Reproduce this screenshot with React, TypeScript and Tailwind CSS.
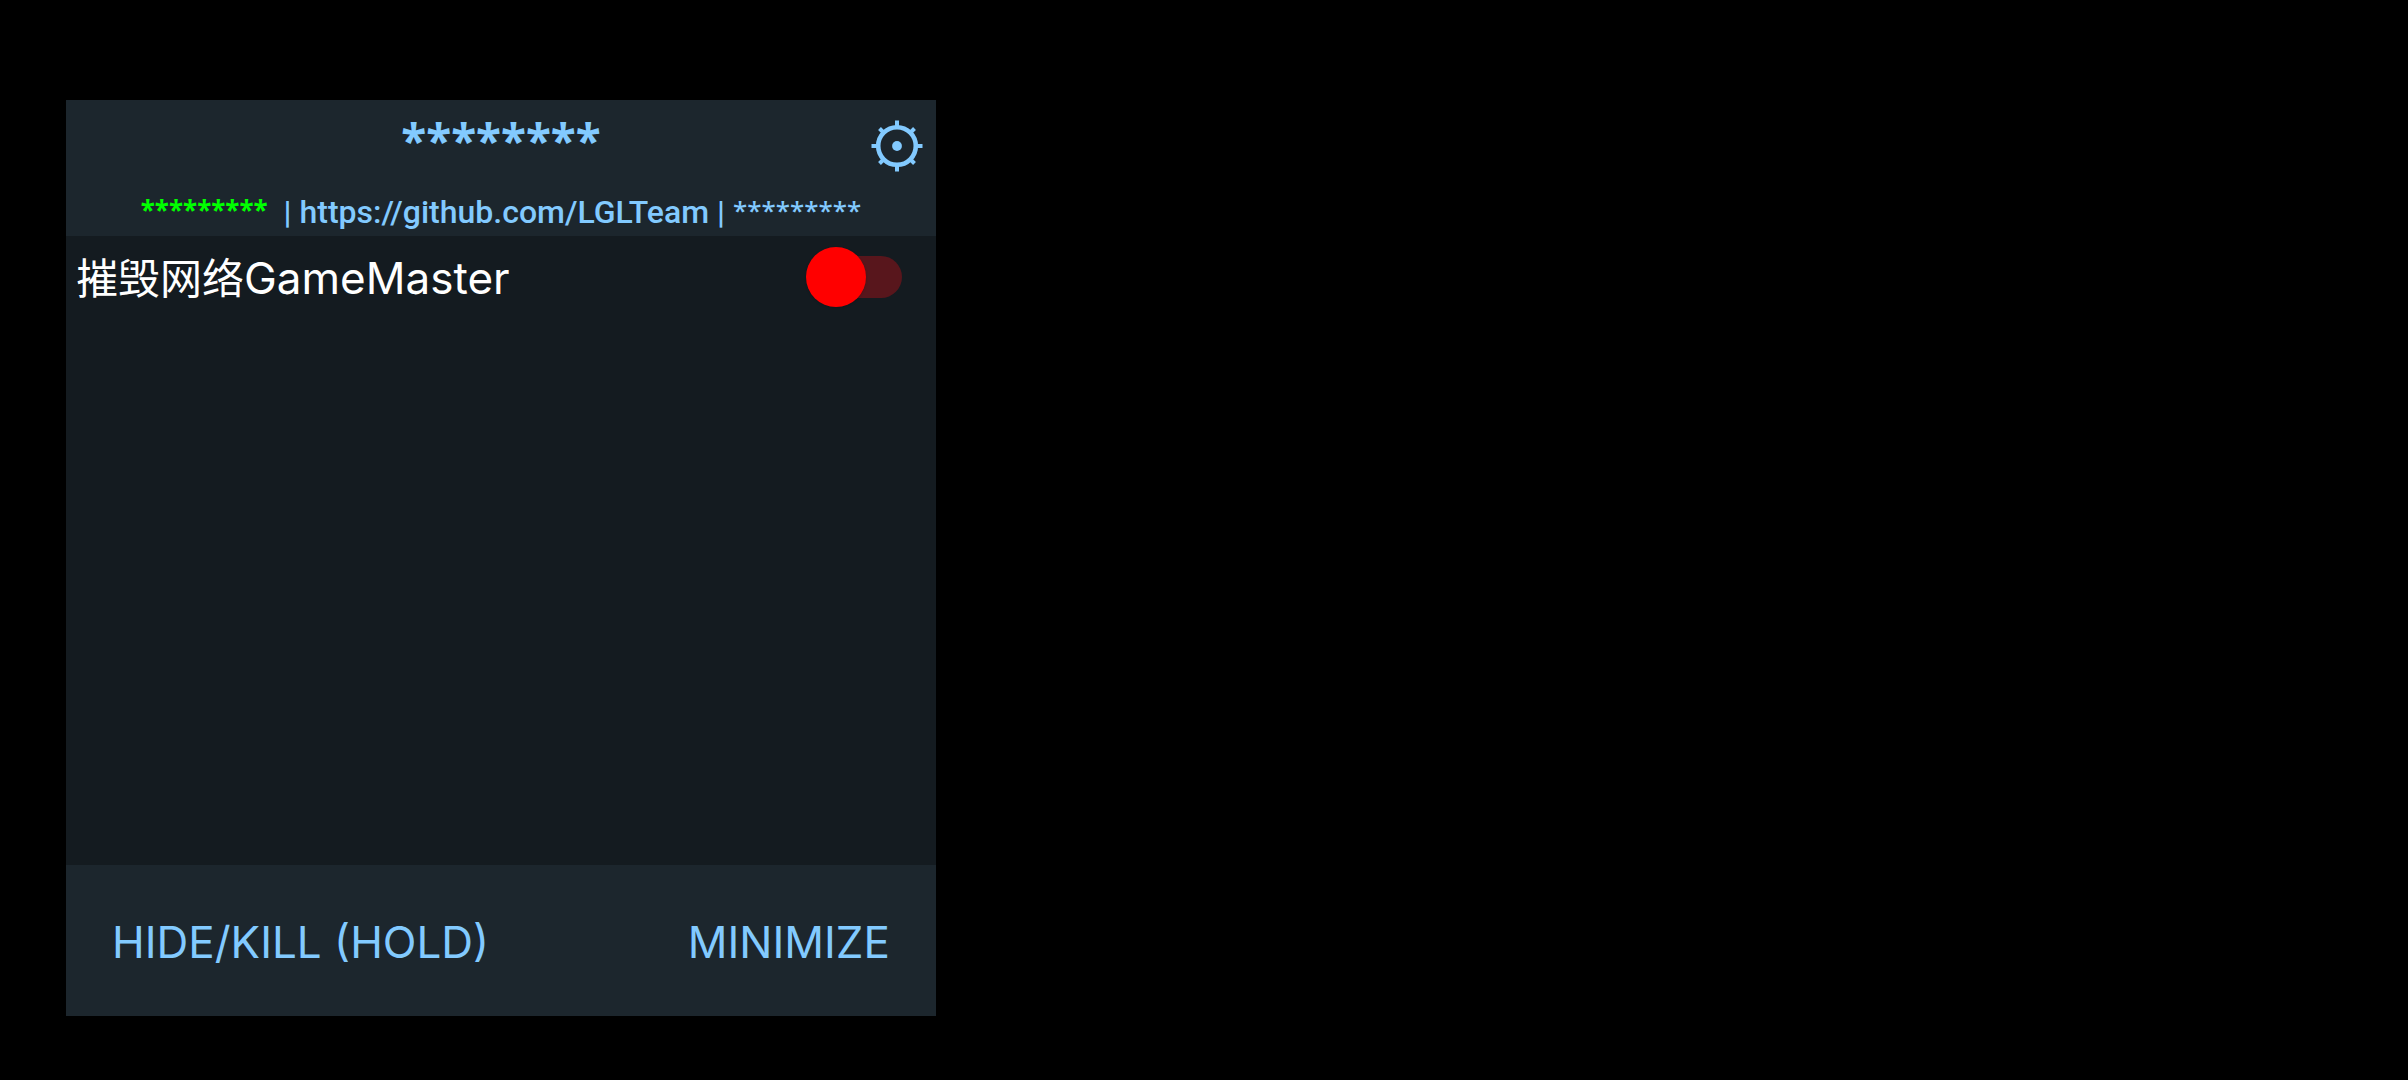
import { useState } from "react";

function GearIcon() {
  return (
    <svg viewBox="0 0 52 52" className="size-[52px]" fill="none" stroke="currentColor" strokeWidth="4" aria-hidden="true">
      <circle cx="26" cy="26" r="18.8" strokeWidth="4.6" />
      <circle cx="26" cy="26" r="4.9" fill="currentColor" stroke="none" />
      <path d="M26 0.5V8M26 44v7.5M0.5 26H8M44 26h7.5M8.5 8.5l5 5M38.5 38.5l5 5M43.5 8.5l-5 5M13.5 38.5l-5 5" />
    </svg>
  );
}

function FeatureSwitch({ prefix, name }: { prefix: string; name: string }) {
  const [on, setOn] = useState(false);
  return (
    <label className="flex items-center justify-between pt-2 pr-[34px] pl-[10px] text-white">
      <span className="pt-1 text-[44px] leading-[60px]">
        <span className="text-[42px]">{prefix}</span>
        {name}
      </span>
      <input type="checkbox" role="switch" className="peer sr-only" checked={on} onChange={(e) => setOn(e.target.checked)} />
      <span className="grid w-24 items-center peer-checked:justify-items-end">
        <span className="col-start-1 row-start-1 h-[42px] w-[84px] justify-self-end rounded-full bg-[#58161c]" />
        <span className="col-start-1 row-start-1 size-[60px] rounded-full bg-[#ff0000] shadow-sm" />
      </span>
    </label>
  );
}

export default function App() {
  return (
    <main className="min-h-screen bg-black px-[66px] pt-[100px] font-['Inter','Noto_Sans_CJK_SC',sans-serif] text-[#82caff]">
      <section className="flex w-full max-w-[870px] flex-col">
        <header className="flex h-[136px] flex-col justify-between bg-[#1c262d] pb-1">
          <div className="grid grid-cols-[1fr_auto_1fr] items-start px-[13px] pt-5">
            <h1 className="col-start-2 font-['Noto_Sans',sans-serif] text-[46px] leading-[40px] font-bold">********</h1>
            <button type="button" aria-label="Settings" className="justify-self-end">
              <GearIcon />
            </button>
          </div>
          <p className="text-center font-['Roboto',sans-serif] text-[32px] leading-10 font-medium whitespace-nowrap">
            <span className="mr-2 align-[3px] font-['Noto_Sans',sans-serif] text-[26px] leading-none font-bold text-[#00ff00]">*********</span> |{" "}
            <a href="https://github.com/LGLTeam">https://github.com/LGLTeam</a> |{" "}
            <span className="align-[3px] font-['Noto_Sans',sans-serif] text-[26px] leading-none">*********</span>
          </p>
        </header>
        <div className="min-h-[629px] bg-[#141b20]">
          <FeatureSwitch prefix="摧毁网络" name="GameMaster" />
        </div>
        <footer className="flex items-center justify-between bg-[#1c262d] px-[46px] pt-[46px] pb-[42px] text-[44px] leading-[63px]">
          <button type="button">HIDE/KILL (HOLD)</button>
          <button type="button">MINIMIZE</button>
        </footer>
      </section>
    </main>
  );
}
